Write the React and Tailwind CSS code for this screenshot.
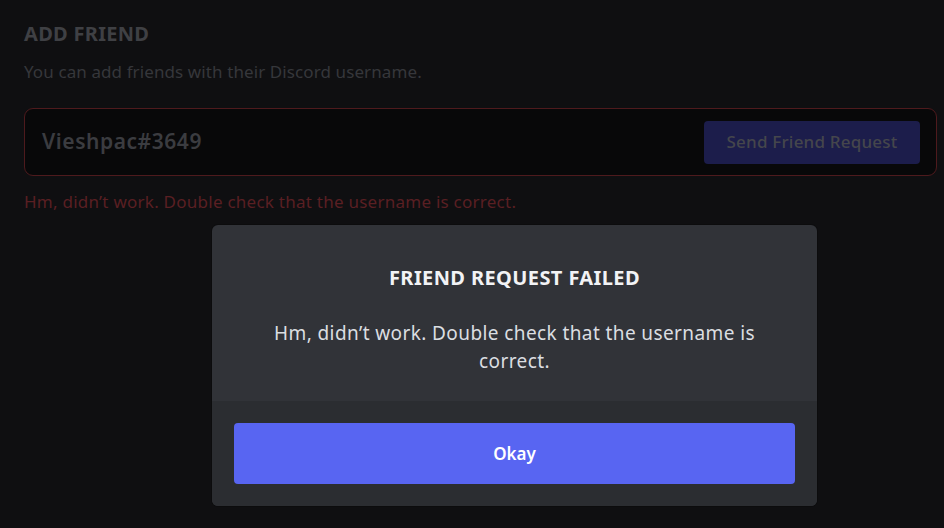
export default function App() {
  return (
    <div className="relative w-[944px] h-[528px] overflow-hidden bg-[#0f0f11] font-['Noto_Sans',sans-serif]">
      {/* Add friend section (dimmed behind overlay) */}
      <div className="pl-6 pr-[7px] pt-[20px]">
        <h2 className="text-[20px] font-bold leading-[27px] text-[#3f4044] tracking-[0.3px]">ADD FRIEND</h2>
        <p className="mt-[14px] text-[17px] leading-[22px] text-[#36373b] tracking-[0.1px]">
          You can add friends with their Discord username.
        </p>
        <div className="mt-[25px] h-[68px] flex items-center justify-between rounded-[9px] border border-[#4e1a1d] bg-[#080809] pl-[17px] pr-4">
          <span className="text-[21px] font-semibold text-[#3b3c40] tracking-[0.55px]">Vieshpac#3649</span>
          <button className="h-[43px] w-[216px] rounded-[4px] bg-[#1c1d4b] text-[17px] font-medium text-[#45464c] tracking-[0.2px]">
            Send Friend Request
          </button>
        </div>
        <p className="mt-[15px] text-[17px] leading-[22px] text-[#5a1f23] tracking-[0.25px]">
          Hm, didn’t work. Double check that the username is correct.
        </p>
      </div>

      {/* Modal */}
      <div className="absolute left-[212px] top-[225px] w-[605px] rounded-[6px] overflow-hidden bg-[#313338] shadow-[0_0_0_1px_rgba(0,0,0,0.2)]">
        <div className="flex flex-col items-center px-12 pt-[40px] pb-[26px] text-center">
          <h3 className="text-[20px] font-bold leading-[26px] text-[#f2f3f5] tracking-[0.4px]">FRIEND REQUEST FAILED</h3>
          <p className="mt-[28px] text-[19px] leading-[28px] text-[#dbdee1] tracking-[0.4px]">
            Hm, didn’t work. Double check that the username is correct.
          </p>
        </div>
        <div className="bg-[#2b2d31] px-[22px] pt-[22px] pb-[22px]">
          <button className="w-full h-[61px] rounded-[4px] bg-[#5865f2] text-[17px] font-semibold text-white">
            Okay
          </button>
        </div>
      </div>
    </div>
  )
}
